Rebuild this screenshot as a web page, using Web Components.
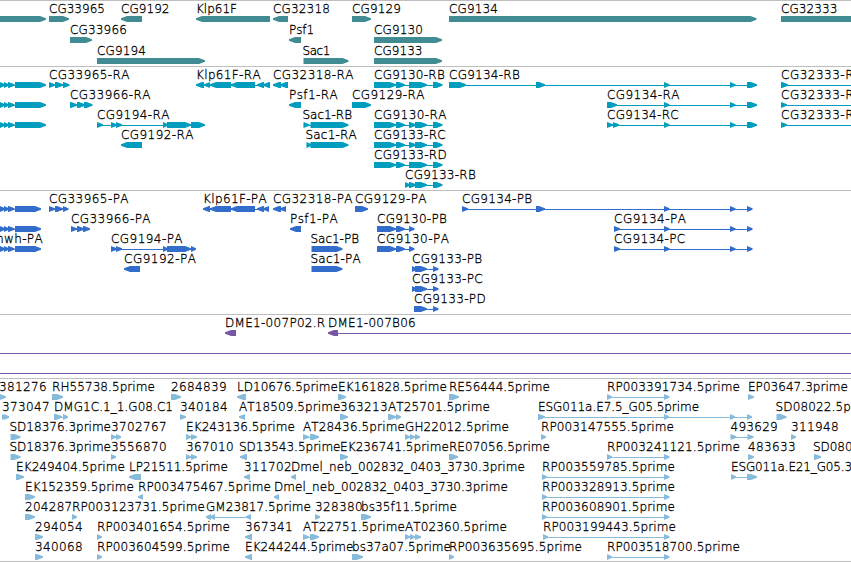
<!DOCTYPE html>
<html lang="en">
<head>
<meta charset="utf-8">
<title>Genome browser</title>
<style>
  body {
    margin: 0;
    background: #fff;
    overflow: hidden;
  }
</style>
</head>
<body>
<genome-view></genome-view>

<script>
const LEFT = '-9,-4 -5,1 0,5 4,9 8,14.5 ';
const RNA_TAIL = ' 664,669.5 730,735.5 747,757';
const CDS_TAIL = ' 664,669.5 730,735.5 747,752.5';
const PAIR = ' 664,669.5';

// Feature: [label, label start, label end, exons, strand, line end]
const TRACKS = [
  {
    name: 'genes', color: '#408c92', rowHeight: 21, pad: 2,
    rows: [
      [
        ['', 0, 0, '-10,46'],
        ['CG33965', 49, 105, '49,69'],
        ['CG9192', 121, 169.5, '121,142', '-'],
        ['Klp61F', 196, 237, '196,270', '-'],
        ['CG32318', 273, 330, '273,288', '-'],
        ['CG9129', 352, 401, '352,371'],
        ['CG9134', 449, 498, '449,756.5'],
        ['CG32333', 781, 837.5, '781,870'],
      ],
      [
        ['CG33966', 70, 127, '70,92'],
        ['Psf1', 289, 314, '289,301', '-'],
        ['CG9130', 374, 423, '374,442'],
      ],
      [
        ['CG9194', 97, 146, '97,205'],
        ['Sac1', 302.5, 330, '303,348'],
        ['CG9133', 374, 422.5, '374,442'],
      ],
    ],
  },
  {
    name: 'transcripts', color: '#009dbf', rowHeight: 20, pad: 3,
    rows: [
      [
        ['', 0, 0, LEFT + '15,46'],
        ['CG33965-RA', 49, 130, '49,55 55,63 63,69.5'],
        ['Klp61F-RA', 196, 261, '196,204 204,210 210,231 231,255 257,264 263,270', '-'],
        ['CG32318-RA', 273, 354, '273,281 280,288', '-'],
        ['CG9130-RB', 374, 445, '374,396 396,405 409,427 433,442.5'],
        ['CG9134-RB', 449, 520, '449,466 536,545' + RNA_TAIL],
        ['CG32333-R', 781, 854, '781,788', '+', 860],
      ],
      [
        ['', 0, 0, LEFT + '15,46'],
        ['CG33966-RA', 70, 151, '70,77 77,85 84,92.5'],
        ['Psf1-RA', 289, 338, '289,301', '-'],
        ['CG9129-RA', 352, 425, '352,371'],
        ['CG9134-RA', 607, 680, '607,617' + RNA_TAIL],
        ['CG32333-R', 781, 854, '781,787', '+', 860],
      ],
      [
        ['', 0, 0, LEFT + '15,46'],
        ['CG9194-RA', 97, 170, '97,103 111,117 116,122 163,168 167,191 191,205'],
        ['Sac1-RB', 302.5, 352, '303,309 310,348'],
        ['CG9130-RA', 374, 447, '374,396 396,405 409,416 415,427 433,442.5'],
        ['CG9134-RC', 607, 679, '607,613 613,619' + RNA_TAIL],
        ['CG32333-R', 781, 854, '781,787', '+', 860],
      ],
      [
        ['CG9192-RA', 121, 194, '121,142', '-'],
        ['Sac1-RA', 305.5, 357, '306,311 310,348'],
        ['CG9133-RC', 374, 446, '374,396 396,405 409,416 415,427 433,442.5'],
      ],
      [
        ['CG9133-RD', 374, 447, '374,396 396,405 409,427 433,442.5'],
      ],
      [
        ['CG9133-RB', 405, 476, '405,410 409,416 415,427 433,442.5'],
      ],
    ],
  },
  {
    name: 'proteins', color: '#336dcc', rowHeight: 20, pad: 3,
    rows: [
      [
        ['', 0, 0, LEFT + '15,41'],
        ['CG33965-PA', 49, 129, '49,55 55,63 63,68.5'],
        ['Klp61F-PA', 203, 267, '203,210 210,231 231,255 257,264 263,269', '-'],
        ['CG32318-PA', 273, 353, '273,281 280,286', '-'],
        ['CG9129-PA', 355, 427, '355,368'],
        ['CG9134-PB', 462, 532.5, '462,468 536,545' + CDS_TAIL],
      ],
      [
        ['', 0, 0, LEFT + '15,41'],
        ['CG33966-PA', 71, 151, '71,77 77,84 83,90'],
        ['Psf1-PA', 290, 338, '290,301', '-'],
        ['CG9130-PB', 377, 447, '377,396 396,405 409,414.5'],
        ['CG9134-PA', 614, 686.5, '614,620' + CDS_TAIL],
      ],
      [
        ['mwh-PA', -8, 43, LEFT + '15,41'],
        ['CG9194-PA', 111, 183, '111,117 116,122 163,168 167,191 191,196'],
        ['Sac1-PB', 310.5, 359, '311,342'],
        ['CG9130-PA', 377, 449.5, '377,396 396,405 409,414.5'],
        ['CG9134-PC', 614, 685.5, '614,620' + CDS_TAIL],
      ],
      [
        ['CG9192-PA', 124, 196.5, '124,140', '-'],
        ['Sac1-PA', 310.5, 361, '311,342'],
        ['CG9133-PB', 412, 482.5, '412,417 415,427 433,438.5'],
      ],
      [
        ['CG9133-PC', 412, 483, '412,417 415,427 433,438.5'],
      ],
      [
        ['CG9133-PD', 414, 486, '414,427 433,438.5'],
      ],
    ],
  },
  {
    name: 'clones', color: '#7657a6', rowHeight: 20, pad: 3,
    rows: [
      [
        ['DME1-007P02.R', 225, 325.5, '225,236', '-'],
        ['DME1-007B06', 328, 416, '328,338', '-', 860],
      ],
      [['', 0, 0, '-20,-10', '-', 860]],
      [['', 0, 0, '-20,-10', '-', 860]],
    ],
  },
  {
    name: 'ests', color: '#87bbdc', rowHeight: 20, pad: 3,
    rows: [
      [
        ['381276', -1, 47, '-4,6'],
        ['RH55738.5prime', 52, 155, '52,63'],
        ['2684839', 171, 227, '171,181'],
        ['LD10676.5prime', 237, 338, '237,246', '-'],
        ['EK161828.5prime', 338, 447, '338,346'],
        ['RE56444.5prime', 449, 550, '449,459'],
        ['RP003391734.5prime', 607, 740, '607,612' + PAIR],
        ['EP03647.3prime', 748, 848, '748,754'],
      ],
      [
        ['373047', 2, 50, '2,6 4,9'],
        ['DMG1C.1_1.G08.C1', 54, 173, '54,62 63,68'],
        ['340184', 180, 228, '180,186'],
        ['AT18509.5prime', 239, 340.5, '239,245', '-'],
        ['363213', 340, 388, '340,348'],
        ['AT25701.5prime', 388, 490, '388,396 396,401'],
        ['ESG011a.E7.5_G05.5prime', 538, 699, '538,545 664,669 730,735 747,752'],
        ['SD08022.5p', 775.5, 851, '776,786'],
      ],
      [
        ['SD18376.3prime', 9.5, 111, '10,20'],
        ['3702767', 111, 167, '111,116 116,121'],
        ['EK243136.5prime', 186, 295, '186,191 191,197'],
        ['AT28436.5prime', 303, 405, '303,309 310,319'],
        ['GH22012.5prime', 405, 509, '405,410 410,415 415,420'],
        ['RP003147555.5prime', 541, 674, '541,546'],
        ['493629', 730.5, 778, '730,736 747,753'],
        ['311948', 791, 839, '791,796'],
      ],
      [
        ['SD18376.3prime', 9.5, 111, '10,20'],
        ['3556870', 111, 167, '111,116'],
        ['367010', 186, 234, '186,191 191,197'],
        ['SD13543.5prime', 239, 340.5, '240,247', '-'],
        ['EK236741.5prime', 340, 449, '340,348'],
        ['RE07056.5prime', 449, 550, '449,458'],
        ['RP003241121.5prime', 607, 740, '607,612' + PAIR],
        ['483633', 748, 796, '748,754'],
        ['SD080', 813, 852.5, '814,821'],
      ],
      [
        ['EK249404.5prime', 16, 125, '16,24'],
        ['LP21511.5prime', 129, 228, '129,141', '-'],
        ['311702', 244, 292, '244,250', '-'],
        ['Dmel_neb_002832_0403_3730.3prime', 291, 525, '291,296', '-'],
        ['RP003559785.5prime', 542, 675, '542,547' + PAIR],
        ['ESG011a.E21_G05.3', 731, 852, '731,736 747,757'],
      ],
      [
        ['EK152359.5prime', 25, 134, '25,35'],
        ['RP003475467.5prime', 138, 271, '138,143', '-'],
        ['Dmel_neb_002832_0403_3730.3prime', 274, 508, '274,279', '-'],
        ['RP003328913.5prime', 542, 675, '542,547' + PAIR],
      ],
      [
        ['204287', 25, 72.5, '25,35'],
        ['RP003123731.5prime', 72, 205, '72,77'],
        ['GM23817.5prime', 206, 311, '206,211 210,215 246,251', '-'],
        ['328380', 315, 363, '315,320'],
        ['bs35f11.5prime', 361, 457, '361,371'],
        ['RP003608901.5prime', 542, 675, '542,547' + PAIR],
      ],
      [
        ['294054', 35, 83, '35,43'],
        ['RP003401654.5prime', 97, 230, '97,102'],
        ['367341', 245, 293, '245,252', '-'],
        ['AT22751.5prime', 303, 405, '303,309 310,319'],
        ['AT02360.5prime', 405, 507, '405,410 410,415 415,421'],
        ['RP003199443.5prime', 543, 676, '543,548' + PAIR],
      ],
      [
        ['340068', 35, 83, '35,43'],
        ['RP003604599.5prime', 97, 230, '97,102'],
        ['EK244244.5prime', 245, 353.5, '245,252', '-'],
        ['bs37a07.5prime', 352, 451, '352,363'],
        ['RP003635695.5prime', 449, 582, '449,454'],
        ['RP003518700.5prime', 607, 740, '607,612' + PAIR],
      ],
    ],
  },
];

// One annotated feature: its name, and its exons joined by a thin line.
class GenomeFeature extends HTMLElement {
  constructor() {
    super();

    const shadowRoot = this.attachShadow({ mode: 'open' });

    shadowRoot.innerHTML = `
      <style>
        :host {
          position: absolute;
          top: 0;
          bottom: 2px;
          display: flex;
          flex-direction: column;
          justify-content: flex-end;
        }

        .label {
          align-self: flex-start;
          font: 200 12px/14px "DejaVu Sans Light", "DejaVu Sans", sans-serif;
          color: #000;
          -webkit-text-stroke: 0.3px #000;
          white-space: pre;
          font-kerning: none;
        }

        svg {
          display: block;
          flex: none;
          height: 6px;
          overflow: visible;
          fill: var(--track-color);
        }
      </style>

      <span class="label"><slot></slot></span>
      <svg></svg>
    `;
  }

  connectedCallback() {
    const start = Number(this.getAttribute('start'));
    const exons = this.getAttribute('exons').split(' ').map(e => e.split(',').map(Number));
    const last = exons[exons.length - 1][1];
    const end = Number(this.getAttribute('line-end')) || last;
    const reverse = this.getAttribute('strand') === '-';
    const svg = this.shadowRoot.querySelector('svg');

    this.style.left = `${start}px`;

    let shapes = '';

    if (exons.length > 1 || end > last) {
      const from = Math.round(reverse ? exons[0][0] + 4 : exons[0][0]);
      const to = end > last ? end : last - 3;
      shapes += `<rect x="${from - start}" y="3" width="${to - from}" height="1"/>`;
    }

    exons.forEach(([a, b]) => {
      shapes += `<polygon points="${this._arrow(a - start, b - start, reverse)}"/>`;
    });

    svg.setAttribute('width', Math.max(1, end - start));
    svg.innerHTML = shapes;
    this._fitLabel();
  }

  _arrow(a, b, reverse) {
    const head = Math.min(6, b - a);

    if (reverse) {
      return `${b},0 ${a + head},0 ${a},2.2 ${a},3.8 ${a + head},6 ${b},6`;
    }
    return `${a},0 ${b - head},0 ${b},2.2 ${b},3.8 ${b - head},6 ${a},6`;
  }

  // Spread the letters so that the name fills its reserved width.
  _fitLabel() {
    const text = this.textContent;

    if (!text) {
      return;
    }

    const label = this.shadowRoot.querySelector('.label');
    const width = Number(this.getAttribute('label-width'));
    const natural = label.getBoundingClientRect().width;

    label.style.letterSpacing = `${(width - natural) / text.length}px`;
  }
}

class TrackRow extends HTMLElement {
  constructor() {
    super();

    this.attachShadow({ mode: 'open' }).innerHTML = `
      <style>
        :host {
          display: block;
          position: relative;
          flex: none;
          height: var(--row-height);
        }
      </style>
      <slot></slot>
    `;
  }
}

class GenomeTrack extends HTMLElement {
  constructor() {
    super();

    this.attachShadow({ mode: 'open' }).innerHTML = `
      <style>
        :host {
          display: flex;
          flex-direction: column;
          flex: none;
          border-top: 1px solid #bebebe;
          padding-top: var(--track-pad);
        }
      </style>
      <slot></slot>
    `;
  }
}

class GenomeView extends HTMLElement {
  constructor() {
    super();

    this.attachShadow({ mode: 'open' }).innerHTML = `
      <style>
        :host {
          display: flex;
          flex-direction: column;
          box-sizing: border-box;
          width: 851px;
          height: 562px;
          overflow: hidden;
          border-bottom: 1px solid #bebebe;
        }
      </style>
    `;
  }

  connectedCallback() {
    TRACKS.forEach(track => {
      const trackEl = document.createElement('genome-track');

      trackEl.id = track.name;
      trackEl.style.setProperty('--track-color', track.color);
      trackEl.style.setProperty('--row-height', `${track.rowHeight}px`);
      trackEl.style.setProperty('--track-pad', `${track.pad}px`);

      track.rows.forEach(row => {
        const rowEl = document.createElement('track-row');

        row.forEach(feature => rowEl.appendChild(this._feature(feature)));
        trackEl.appendChild(rowEl);
      });

      this.shadowRoot.appendChild(trackEl);
    });
  }

  _feature([label, start, end, exons, strand, lineEnd]) {
    const el = document.createElement('genome-feature');

    el.textContent = label;
    el.setAttribute('start', start);
    el.setAttribute('label-width', end - start);
    el.setAttribute('exons', exons);
    el.setAttribute('strand', strand || '+');
    if (lineEnd) {
      el.setAttribute('line-end', lineEnd);
    }
    return el;
  }
}

window.customElements.define('genome-feature', GenomeFeature);
window.customElements.define('track-row', TrackRow);
window.customElements.define('genome-track', GenomeTrack);
window.customElements.define('genome-view', GenomeView);
</script>
</body>
</html>
